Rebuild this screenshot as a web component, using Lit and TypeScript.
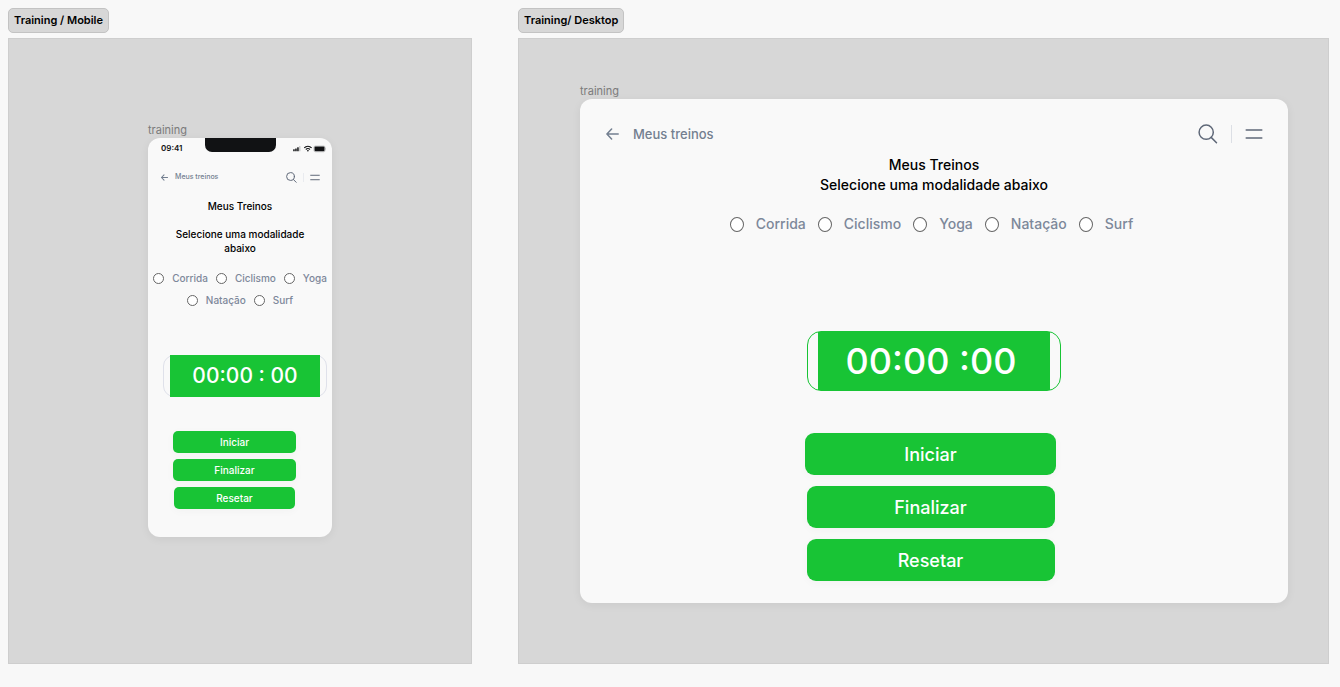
import { LitElement, html, css, svg } from "lit";
import { customElement, property } from "lit/decorators.js";

type Variant = "mobile" | "desktop";

const SPORTS = ["Corrida", "Ciclismo", "Yoga", "Natação", "Surf"];

@customElement("status-bar")
class StatusBar extends LitElement {
  static styles = css`
    :host {
      display: grid;
      grid-template-columns: 1fr 71px 1fr;
      height: 22px;
    }
    .time {
      padding-left: 13px;
      font-size: 8px;
      line-height: 21px;
      font-weight: 600;
      color: #111214;
    }
    .notch {
      height: 14px;
      border-radius: 0 0 7px 7px;
      background: #111214;
    }
    .signals {
      display: flex;
      justify-content: flex-end;
      align-items: center;
      padding-right: 5px;
    }
    svg {
      display: block;
    }
  `;

  render() {
    return html`
      <span class="time">09:41</span>
      <span class="notch"></span>
      <span class="signals">
        <svg width="34" height="8" viewBox="0 0 34 8" fill="#111214">
          <rect x="0.2" y="4.2" width="1.5" height="2" rx=".3" />
          <rect x="2.2" y="3.4" width="1.5" height="2.8" rx=".3" />
          <rect x="4.2" y="2.2" width="1.5" height="4" rx=".3" />
          <rect x="6.2" y="1" width="1.2" height="5.2" rx=".3" opacity=".25" />
          <path d="M11.2 2.9a5.4 5.4 0 0 1 7.4 0" fill="none" stroke="#111214" stroke-width="1.2" />
          <path d="M12.8 4.5a3.1 3.1 0 0 1 4.2 0" fill="none" stroke="#111214" stroke-width="1.1" />
          <path d="M13.8 5.5a1.6 1.6 0 0 1 2.2 0L14.9 6.8z" />
          <rect x="20.9" y="1" width="11.2" height="5.8" rx="1.5" fill="none" stroke="#111214" stroke-opacity=".4" stroke-width=".5" />
          <rect x="21.5" y="1.6" width="10" height="4.6" rx="1" />
          <path d="M32.5 3.1q.9.8 0 1.8z" opacity=".5" />
        </svg>
      </span>
    `;
  }
}

@customElement("training-screen")
class TrainingScreen extends LitElement {
  @property({ reflect: true }) variant: Variant = "desktop";

  static styles = css`
    :host {
      display: block;
      border-radius: 12px;
      background: #f9f9f9;
      box-shadow: 0 2px 10px rgba(0, 0, 0, 0.06);
      color: #000;
      overflow: hidden;
    }
    h3,
    p {
      margin: 0;
      font-weight: 500;
    }
    .bar {
      display: flex;
      align-items: center;
      color: #737f90;
    }
    .back {
      display: flex;
      align-items: center;
      color: inherit;
      text-decoration: none;
      font-weight: 500;
    }
    .tools {
      display: flex;
      align-items: center;
      margin-left: auto;
    }
    .icon {
      display: block;
      padding: 0;
      border: 0;
      background: none;
      color: #5f6878;
    }
    .divider {
      width: 1px;
      background: #dcdfe5;
    }
    svg {
      display: block;
    }
    .heading {
      text-align: center;
    }
    .sports {
      display: flex;
      flex-wrap: wrap;
      justify-content: center;
      color: #7d889a;
      font-weight: 500;
    }
    .sport {
      display: flex;
      align-items: center;
    }
    .radio {
      appearance: none;
      flex: none;
      margin: 0;
      border: 1px solid #666;
      border-radius: 50%;
      background: #fff;
    }
    .radio:checked {
      background: #18c435;
    }
    .timer {
      display: flex;
      box-sizing: border-box;
      margin: 0 auto;
    }
    .digits {
      flex: 1;
      background: #18c435;
      color: #fff;
      text-align: center;
      font-weight: 500;
      white-space: pre;
    }
    .actions {
      display: flex;
      flex-direction: column;
      align-items: center;
    }
    .action {
      padding: 0;
      border: 0;
      background: #18c435;
      color: #fff;
      font-family: inherit;
      font-weight: 500;
      box-shadow: 0 2px 10px rgba(0, 0, 0, 0.03);
    }

    :host([variant="desktop"]) {
      padding-bottom: 22px;
    }
    .desktop .bar {
      height: 20px;
      padding: 25px 25px 9px 26px;
    }
    .desktop .back {
      gap: 14px;
      font-size: 13px;
      line-height: 20px;
    }
    .desktop .tools {
      gap: 13px;
    }
    .desktop .divider {
      height: 18px;
    }
    .desktop .heading {
      padding-top: 2px;
      font-size: 14px;
      line-height: 20px;
    }
    .desktop .heading h3 {
      font-size: 14px;
    }
    .desktop .sports {
      gap: 12px;
      padding: 19px 5px 0 0;
      font-size: 14px;
      line-height: 20px;
    }
    .desktop .sport {
      gap: 12px;
    }
    .desktop .radio {
      width: 14px;
      height: 15px;
    }
    .desktop .timer {
      width: 254px;
      margin-top: 97px;
      padding: 0 10px;
      border: 1px solid #18c435;
      border-radius: 14px;
    }
    .desktop .digits {
      padding-right: 6px;
      font-size: 36px;
      line-height: 58px;
    }
    .desktop .actions {
      gap: 11px;
      padding: 42px 7px 0 0;
    }
    .desktop .action {
      width: 248px;
      height: 42px;
      border-radius: 9px;
      font-size: 18px;
    }
    .desktop .primary {
      width: 251px;
    }

    :host([variant="mobile"]) {
      padding-bottom: 28px;
    }
    .mobile .bar {
      padding: 11px 12px 0 13px;
    }
    .mobile .back {
      gap: 7px;
      font-size: 7px;
      line-height: 12px;
    }
    .mobile .tools {
      gap: 6px;
    }
    .mobile .divider {
      height: 9px;
      background: #e9ebef;
    }
    .mobile .heading {
      padding: 16px 24px 0;
      font-size: 10px;
      line-height: 14px;
    }
    .mobile .heading h3 {
      padding-bottom: 14px;
      font-size: 10px;
    }
    .mobile .sports {
      gap: 8px;
      padding: 16px 0 0;
      font-size: 10px;
      line-height: 14px;
    }
    .mobile .sport {
      gap: 8px;
    }
    .mobile .radio {
      width: 11px;
      height: 11px;
    }
    .mobile .timer {
      width: 164px;
      margin-top: 48px;
      margin-right: 5px;
      padding: 0 6px;
      border: 1px solid #dfe1ea;
      border-radius: 11px;
    }
    .mobile .digits {
      margin: -1px 0;
      font-size: 21px;
      line-height: 42px;
    }
    .mobile .actions {
      gap: 6px;
      padding: 34px 11px 0 0;
    }
    .mobile .action {
      width: 123px;
      height: 22px;
      border-radius: 5px;
      font-size: 10px;
    }
    .mobile .last {
      width: 121px;
    }
  `;

  render() {
    const mobile = this.variant === "mobile";
    const size = (large: number, small: number) => (mobile ? small : large);
    const stroke = size(1.5, 1.8);
    return html`
      <div class=${this.variant}>
        ${mobile ? html`<status-bar></status-bar>` : ""}
        <div class="bar">
          <a class="back" href="#">
            <svg width=${size(13, 7)} height=${size(12, 7)} viewBox="0 0 13 12" fill="none" stroke="currentColor" stroke-width=${size(1.5, 1.9)} stroke-linecap="round" stroke-linejoin="round">
              ${svg`<path d="M12.2 6H.9M5.6 1 .9 6l4.7 5" />`}
            </svg>
            Meus treinos
          </a>
          <div class="tools">
            <button class="icon" aria-label="Buscar">
              <svg width=${size(20, 11)} height=${size(20, 11)} viewBox="0 0 20 20" fill="none" stroke="currentColor" stroke-width=${stroke} stroke-linecap="round">
                ${svg`<circle cx="8.2" cy="8.2" r="7.1" /><path d="m13.2 13.4 5.3 5.3" />`}
              </svg>
            </button>
            <span class="divider"></span>
            <button class="icon" aria-label="Menu">
              <svg width=${size(18, 10)} height=${size(12, 7)} viewBox="0 0 18 12" fill="none" stroke="currentColor" stroke-width=${stroke} stroke-linecap="round">
                ${svg`<path d="M1.2 2h15.6M1.2 10h15.6" />`}
              </svg>
            </button>
          </div>
        </div>
        <div class="heading">
          <h3>Meus Treinos</h3>
          <p>Selecione uma modalidade abaixo</p>
        </div>
        <div class="sports" role="radiogroup" aria-label="Modalidade">
          ${SPORTS.map(
            (name) => html`
              <label class="sport"><input class="radio" type="radio" name="sport" value=${name} />${name}</label>
            `
          )}
        </div>
        <div class="timer" role="timer"><span class="digits">${mobile ? "00:00 : 00" : "00:00 :00"}</span></div>
        <div class="actions">
          <button class="action primary">Iniciar</button>
          <button class="action">Finalizar</button>
          <button class="action last">Resetar</button>
        </div>
      </div>
    `;
  }
}

@customElement("app-root")
class AppRoot extends LitElement {
  static styles = css`
    :host {
      display: grid;
      grid-template-columns: 464fr 811fr;
      gap: 46px;
      box-sizing: border-box;
      min-height: 100vh;
      padding: 8px 11px 23px 8px;
      background: #f8f8f8;
      font-family: Inter, "Liberation Sans", sans-serif;
    }
    .section {
      display: flex;
      flex-direction: column;
      align-items: flex-start;
      gap: 5px;
    }
    .tag {
      box-sizing: border-box;
      margin: 0;
      padding: 0 5px;
      border: 1px solid #c3c3c3;
      border-radius: 5px;
      background: #d7d7d7;
      color: #000;
      font-size: 11px;
      line-height: 23px;
      font-weight: 600;
    }
    .board {
      flex: 1;
      align-self: stretch;
      box-sizing: border-box;
      border: 1px solid #cecece;
      background: #d7d7d7;
    }
    .mobile-board {
      padding: 84px 139px 60px;
    }
    .desktop-board {
      padding: 45px 40px 60px 61px;
    }
    .frame-name {
      margin: 0;
      color: #7b7b7b;
      font-size: 11px;
      line-height: 15px;
    }
  `;

  render() {
    return html`
      <section class="section">
        <h2 class="tag">Training / Mobile</h2>
        <div class="board mobile-board">
          <p class="frame-name">training</p>
          <training-screen variant="mobile"></training-screen>
        </div>
      </section>
      <section class="section">
        <h2 class="tag">Training/ Desktop</h2>
        <div class="board desktop-board">
          <p class="frame-name">training</p>
          <training-screen variant="desktop"></training-screen>
        </div>
      </section>
    `;
  }
}
